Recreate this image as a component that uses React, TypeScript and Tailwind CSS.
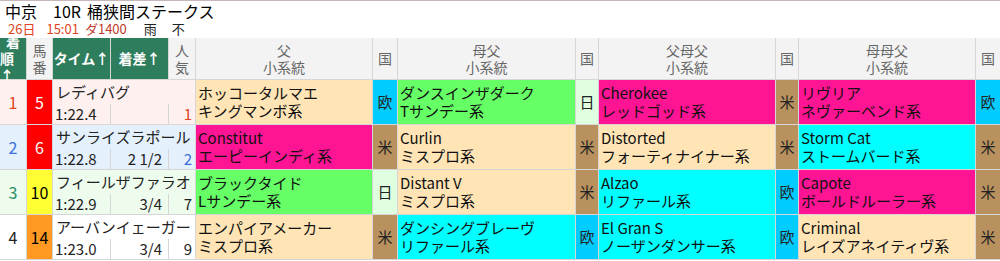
import React from 'react';

type Ped = { name: string; line: string; bg: string; country: string };

type Row = {
  rank: number;
  rankColor: string;
  rowBg: string;
  num: number;
  numBg: string;
  numText: string;
  horse: string;
  time: string;
  margin: string;
  pop: number;
  peds: Ped[];
};

const BEIGE = 'bg-[#ffe4b5]';
const CYAN = 'bg-[#00ffff]';
const PINK = 'bg-[#ff1493]';
const GREEN = 'bg-[#66ff66]';

const countryBg: Record<string, string> = {
  '欧': 'bg-[#00ccff]',
  '米': 'bg-[#b8915e]',
  '日': 'bg-[#e0ffe0]',
};

const rows: Row[] = [
  {
    rank: 1, rankColor: 'text-[#e0441c]', rowBg: 'bg-[#fff0f0]',
    num: 5, numBg: 'bg-[#ff0000]', numText: 'text-white',
    horse: 'レディバグ', time: '1:22.4', margin: '', pop: 1,
    peds: [
      { name: 'ホッコータルマエ', line: 'キングマンボ系', bg: BEIGE, country: '欧' },
      { name: 'ダンスインザダーク', line: 'Tサンデー系', bg: GREEN, country: '日' },
      { name: 'Cherokee', line: 'レッドゴッド系', bg: PINK, country: '米' },
      { name: 'リヴリア', line: 'ネヴァーベンド系', bg: PINK, country: '欧' },
    ],
  },
  {
    rank: 2, rankColor: 'text-[#3a6fd8]', rowBg: 'bg-[#e4f0fc]',
    num: 6, numBg: 'bg-[#ff0000]', numText: 'text-white',
    horse: 'サンライズラポール', time: '1:22.8', margin: '2 1/2', pop: 2,
    peds: [
      { name: 'Constitut', line: 'エーピーインディ系', bg: PINK, country: '米' },
      { name: 'Curlin', line: 'ミスプロ系', bg: BEIGE, country: '米' },
      { name: 'Distorted', line: 'フォーティナイナー系', bg: BEIGE, country: '米' },
      { name: 'Storm Cat', line: 'ストームバード系', bg: CYAN, country: '米' },
    ],
  },
  {
    rank: 3, rankColor: 'text-[#2e8b6a]', rowBg: 'bg-[#eefcee]',
    num: 10, numBg: 'bg-[#ffff33]', numText: 'text-black',
    horse: 'フィールザファラオ', time: '1:22.9', margin: '3/4', pop: 7,
    peds: [
      { name: 'ブラックタイド', line: 'Lサンデー系', bg: GREEN, country: '日' },
      { name: 'Distant V', line: 'ミスプロ系', bg: BEIGE, country: '米' },
      { name: 'Alzao', line: 'リファール系', bg: CYAN, country: '欧' },
      { name: 'Capote', line: 'ボールドルーラー系', bg: PINK, country: '米' },
    ],
  },
  {
    rank: 4, rankColor: 'text-[#222]', rowBg: 'bg-white',
    num: 14, numBg: 'bg-[#ff9922]', numText: 'text-black',
    horse: 'アーバンイェーガー', time: '1:23.0', margin: '3/4', pop: 9,
    peds: [
      { name: 'エンパイアメーカー', line: 'ミスプロ系', bg: BEIGE, country: '米' },
      { name: 'ダンシングブレーヴ', line: 'リファール系', bg: CYAN, country: '欧' },
      { name: 'El Gran S', line: 'ノーザンダンサー系', bg: CYAN, country: '欧' },
      { name: 'Criminal', line: 'レイズアネイティヴ系', bg: BEIGE, country: '米' },
    ],
  },
];

const font = { fontFamily: '"Noto Sans CJK JP", "Noto Sans", sans-serif' };

function GrayHead({ top, bottom }: { top: string; bottom?: string }) {
  return (
    <div className="bg-[#f3f3f3] text-[#666] flex flex-col items-center justify-center text-[14px] leading-[17px]">
      <span>{top}</span>
      {bottom && <span>{bottom}</span>}
    </div>
  );
}

function GreenHead({ children }: { children: React.ReactNode }) {
  return (
    <div className="bg-[#2e7d5c] text-white font-bold flex flex-col items-center justify-center text-[14px] leading-[17px]">
      {children}
    </div>
  );
}

export default function App() {
  return (
    <div className="w-[1000px] h-[261px] bg-white overflow-hidden border-t border-[#c8b6ba] text-[#222]" style={font}>
      {/* race info */}
      <div className="h-[37px] px-[5px] pt-[1px]">
        <div className="flex text-[16px] leading-[18px] text-black">
          <span>中京</span>
          <span className="ml-[16px]">10R</span>
          <span className="ml-[6px]">桶狭間ステークス</span>
        </div>
        <div className="flex text-[13px] leading-[17px] ml-[3px]">
          <span className="text-[#e0441c]">26日</span>
          <span className="ml-[11px] text-[#e0441c]">15:01</span>
          <span className="ml-[6px] text-[#c0392b]">ダ1400</span>
          <span className="ml-[17px]">雨</span>
          <span className="ml-[15px]">不</span>
        </div>
      </div>

      {/* table */}
      <div className="grid grid-cols-[26px_25px_57px_57px_26px_176px_24px_177px_22px_176px_22px_176px_24px] grid-rows-[41px_44px_44px_44px_44px] gap-px bg-[#d6d6d6] border-b border-[#d6d6d6]">
        <GreenHead>
          <span>着</span>
          <span>順↑</span>
        </GreenHead>
        <GrayHead top="馬" bottom="番" />
        <GreenHead>タイム↑</GreenHead>
        <GreenHead>着差↑</GreenHead>
        <GrayHead top="人" bottom="気" />
        <GrayHead top="父" bottom="小系統" />
        <GrayHead top="国" />
        <GrayHead top="母父" bottom="小系統" />
        <GrayHead top="国" />
        <GrayHead top="父母父" bottom="小系統" />
        <GrayHead top="国" />
        <GrayHead top="母母父" bottom="小系統" />
        <GrayHead top="国" />

        {rows.map((r) => (
          <React.Fragment key={r.num}>
            <div className={`${r.rowBg} ${r.rankColor} flex items-center justify-center text-[16px]`}>{r.rank}</div>
            <div className={`${r.numBg} ${r.numText} flex items-center justify-center text-[16px]`}>{r.num}</div>
            <div className={`${r.rowBg} col-span-3 flex flex-col`}>
              <div className="h-[24px] pl-[3px] pt-[2px] text-[15px] leading-[20px] whitespace-nowrap overflow-hidden">{r.horse}</div>
              <div className="flex-1 grid grid-cols-[57px_57px_26px] gap-px bg-[#d6d6d6] text-[15px] leading-[19px]">
                <div className={`${r.rowBg} pl-[2px]`}>{r.time}</div>
                <div className={`${r.rowBg} text-right pr-[6px]`}>{r.margin}</div>
                <div className={`${r.rowBg} text-right pr-[3px] ${r.rank <= 2 ? r.rankColor : ''}`}>{r.pop}</div>
              </div>
            </div>
            {r.peds.map((p, i) => (
              <React.Fragment key={i}>
                <div className={`${p.bg} pl-[2px] pt-[4px] text-[15px] leading-[18px] text-[#111] whitespace-nowrap overflow-hidden`}>
                  <div>{p.name}</div>
                  <div>{p.line}</div>
                </div>
                <div className={`${countryBg[p.country]} flex items-center justify-center text-[15px] text-[#222]`}>{p.country}</div>
              </React.Fragment>
            ))}
          </React.Fragment>
        ))}
      </div>
    </div>
  );
}
